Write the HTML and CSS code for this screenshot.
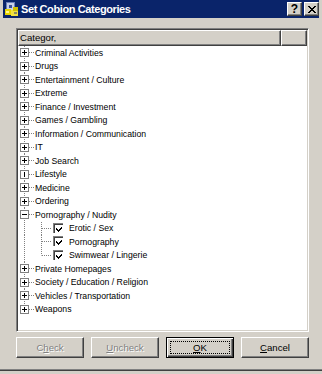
FILE: index.html
```html
<!DOCTYPE html>
<html>
<head>
<meta charset="utf-8">
<link rel="stylesheet" href="styles.css">
</head>
<body>
<div class="window">
  <div class="titlebar">
    <svg class="appicon" width="16" height="16" viewBox="0 0 16 16" shape-rendering="crispEdges">
      <rect x="2" y="1" width="9" height="9" fill="#6a7fb8"/>
      <rect x="3" y="2" width="7" height="7" fill="#c8d0e8"/>
      <rect x="5" y="4" width="3" height="3" fill="#3a4f98"/>
      <rect x="1" y="8" width="6" height="6" fill="#e8d400"/>
      <rect x="7" y="9" width="7" height="6" fill="#f0e040"/>
      <rect x="9" y="6" width="5" height="4" fill="#d0c000"/>
      <rect x="2" y="10" width="3" height="2" fill="#fff890"/>
      <rect x="10" y="11" width="3" height="2" fill="#8a8a60"/>
    </svg>
    <span class="title">Set Cobion Categories</span>
    <span class="capbtns">
      <span class="capbtn help">?</span>
      <span class="capbtn close"><svg width="8" height="7" viewBox="0 0 8 7" shape-rendering="crispEdges"><path d="M0 0h2v1h-2zM6 0h2v1h-2zM1 1h2v1h-2zM5 1h2v1h-2zM2 2h4v1h-4zM3 3h2v1h-2zM2 4h4v1h-4zM1 5h2v1h-2zM5 5h2v1h-2zM0 6h2v1h-2zM6 6h2v1h-2z" fill="#000"/></svg></span>
    </span>
  </div>
  <div class="content">
    <div class="listview">
      <div class="header">
        <div class="hcol first">Categor,</div>
        <div class="hcol rest"></div>
      </div>
      <div class="tree">
        <div class="node"><span class="gutter"><svg class="exp" width="9" height="9" viewBox="0 0 9 9" shape-rendering="crispEdges"><rect x="0.5" y="0.5" width="8" height="8" fill="#fff" stroke="#808080"/><path d="M2 4.5h5M4.5 2v5" stroke="#000"/></svg></span><span class="label">Criminal Activities</span></div>
        <div class="node"><span class="gutter"><svg class="exp" width="9" height="9" viewBox="0 0 9 9" shape-rendering="crispEdges"><rect x="0.5" y="0.5" width="8" height="8" fill="#fff" stroke="#808080"/><path d="M2 4.5h5M4.5 2v5" stroke="#000"/></svg></span><span class="label">Drugs</span></div>
        <div class="node"><span class="gutter"><svg class="exp" width="9" height="9" viewBox="0 0 9 9" shape-rendering="crispEdges"><rect x="0.5" y="0.5" width="8" height="8" fill="#fff" stroke="#808080"/><path d="M2 4.5h5M4.5 2v5" stroke="#000"/></svg></span><span class="label">Entertainment / Culture</span></div>
        <div class="node"><span class="gutter"><svg class="exp" width="9" height="9" viewBox="0 0 9 9" shape-rendering="crispEdges"><rect x="0.5" y="0.5" width="8" height="8" fill="#fff" stroke="#808080"/><path d="M2 4.5h5M4.5 2v5" stroke="#000"/></svg></span><span class="label">Extreme</span></div>
        <div class="node"><span class="gutter"><svg class="exp" width="9" height="9" viewBox="0 0 9 9" shape-rendering="crispEdges"><rect x="0.5" y="0.5" width="8" height="8" fill="#fff" stroke="#808080"/><path d="M2 4.5h5M4.5 2v5" stroke="#000"/></svg></span><span class="label">Finance / Investment</span></div>
        <div class="node"><span class="gutter"><svg class="exp" width="9" height="9" viewBox="0 0 9 9" shape-rendering="crispEdges"><rect x="0.5" y="0.5" width="8" height="8" fill="#fff" stroke="#808080"/><path d="M2 4.5h5M4.5 2v5" stroke="#000"/></svg></span><span class="label">Games / Gambling</span></div>
        <div class="node"><span class="gutter"><svg class="exp" width="9" height="9" viewBox="0 0 9 9" shape-rendering="crispEdges"><rect x="0.5" y="0.5" width="8" height="8" fill="#fff" stroke="#808080"/><path d="M2 4.5h5M4.5 2v5" stroke="#000"/></svg></span><span class="label">Information / Communication</span></div>
        <div class="node"><span class="gutter"><svg class="exp" width="9" height="9" viewBox="0 0 9 9" shape-rendering="crispEdges"><rect x="0.5" y="0.5" width="8" height="8" fill="#fff" stroke="#808080"/><path d="M2 4.5h5M4.5 2v5" stroke="#000"/></svg></span><span class="label">IT</span></div>
        <div class="node"><span class="gutter"><svg class="exp" width="9" height="9" viewBox="0 0 9 9" shape-rendering="crispEdges"><rect x="0.5" y="0.5" width="8" height="8" fill="#fff" stroke="#808080"/><path d="M2 4.5h5M4.5 2v5" stroke="#000"/></svg></span><span class="label">Job Search</span></div>
        <div class="node"><span class="gutter"><svg class="exp" width="9" height="9" viewBox="0 0 9 9" shape-rendering="crispEdges"><rect x="0.5" y="0.5" width="8" height="8" fill="#fff" stroke="#808080"/><path d="M4.5 2v5" stroke="#000"/></svg></span><span class="label">Lifestyle</span></div>
        <div class="node"><span class="gutter"><svg class="exp" width="9" height="9" viewBox="0 0 9 9" shape-rendering="crispEdges"><rect x="0.5" y="0.5" width="8" height="8" fill="#fff" stroke="#808080"/><path d="M2 4.5h5M4.5 2v5" stroke="#000"/></svg></span><span class="label">Medicine</span></div>
        <div class="node"><span class="gutter"><svg class="exp" width="9" height="9" viewBox="0 0 9 9" shape-rendering="crispEdges"><rect x="0.5" y="0.5" width="8" height="8" fill="#fff" stroke="#808080"/><path d="M2 4.5h5M4.5 2v5" stroke="#000"/></svg></span><span class="label">Ordering</span></div>
        <div class="node"><span class="gutter"><svg class="exp" width="9" height="9" viewBox="0 0 9 9" shape-rendering="crispEdges"><rect x="0.5" y="0.5" width="8" height="8" fill="#fff" stroke="#808080"/><path d="M2 4.5h5" stroke="#000"/></svg></span><span class="label">Pornography / Nudity</span></div>
        <div class="node child"><span class="gutter"><svg class="chk" width="11" height="11" viewBox="0 0 11 11" shape-rendering="crispEdges"><path d="M0 0h11v1h-10v10h-1z" fill="#808080"/><path d="M1 1h9v1h-8v8h-1z" fill="#404040"/><path d="M10 0h1v11h-11v-1h10z" fill="#fff"/><rect x="2" y="2" width="8" height="8" fill="#fff"/><path d="M3 5h1v1h1v1h1v-1h1v-1h1v-1h1v2h-1v1h-1v1h-1v1h-1v-1h-1v-1h-1z" fill="#000"/></svg></span><span class="label">Erotic / Sex</span></div>
        <div class="node child"><span class="gutter"><svg class="chk" width="11" height="11" viewBox="0 0 11 11" shape-rendering="crispEdges"><path d="M0 0h11v1h-10v10h-1z" fill="#808080"/><path d="M1 1h9v1h-8v8h-1z" fill="#404040"/><path d="M10 0h1v11h-11v-1h10z" fill="#fff"/><rect x="2" y="2" width="8" height="8" fill="#fff"/><path d="M3 5h1v1h1v1h1v-1h1v-1h1v-1h1v2h-1v1h-1v1h-1v1h-1v-1h-1v-1h-1z" fill="#000"/></svg></span><span class="label">Pornography</span></div>
        <div class="node child lastchild"><span class="gutter"><svg class="chk" width="11" height="11" viewBox="0 0 11 11" shape-rendering="crispEdges"><path d="M0 0h11v1h-10v10h-1z" fill="#808080"/><path d="M1 1h9v1h-8v8h-1z" fill="#404040"/><path d="M10 0h1v11h-11v-1h10z" fill="#fff"/><rect x="2" y="2" width="8" height="8" fill="#fff"/><path d="M3 5h1v1h1v1h1v-1h1v-1h1v-1h1v2h-1v1h-1v1h-1v1h-1v-1h-1v-1h-1z" fill="#000"/></svg></span><span class="label">Swimwear / Lingerie</span></div>
        <div class="node"><span class="gutter"><svg class="exp" width="9" height="9" viewBox="0 0 9 9" shape-rendering="crispEdges"><rect x="0.5" y="0.5" width="8" height="8" fill="#fff" stroke="#808080"/><path d="M2 4.5h5M4.5 2v5" stroke="#000"/></svg></span><span class="label">Private Homepages</span></div>
        <div class="node"><span class="gutter"><svg class="exp" width="9" height="9" viewBox="0 0 9 9" shape-rendering="crispEdges"><rect x="0.5" y="0.5" width="8" height="8" fill="#fff" stroke="#808080"/><path d="M2 4.5h5M4.5 2v5" stroke="#000"/></svg></span><span class="label">Society / Education / Religion</span></div>
        <div class="node"><span class="gutter"><svg class="exp" width="9" height="9" viewBox="0 0 9 9" shape-rendering="crispEdges"><rect x="0.5" y="0.5" width="8" height="8" fill="#fff" stroke="#808080"/><path d="M2 4.5h5M4.5 2v5" stroke="#000"/></svg></span><span class="label">Vehicles / Transportation</span></div>
        <div class="node lastroot"><span class="gutter"><svg class="exp" width="9" height="9" viewBox="0 0 9 9" shape-rendering="crispEdges"><rect x="0.5" y="0.5" width="8" height="8" fill="#fff" stroke="#808080"/><path d="M2 4.5h5M4.5 2v5" stroke="#000"/></svg></span><span class="label">Weapons</span></div>
      </div>
    </div>
    <div class="buttons">
      <div class="btn disabled"><span>C<u>h</u>eck</span></div>
      <div class="btn disabled"><span><u>U</u>ncheck</span></div>
      <div class="btn default"><div class="focus"><span><u>O</u>K</span></div></div>
      <div class="btn"><span><u>C</u>ancel</span></div>
    </div>
  </div>
</div>
</body>
</html>
```

FILE: styles.css
```css
html, body {
  margin: 0;
  padding: 0;
  background: #d4d0c8;
}

body {
  width: 322px;
  height: 374px;
  overflow: hidden;
  font-family: "Liberation Sans", Arial, sans-serif;
}

.window {
  box-sizing: border-box;
  width: 322px;
  height: 371px;
  padding: 0 3px;
  background: #d4d0c8;
  border-bottom: 1px solid #404040;
  box-shadow: inset 0 -1px 0 #808080;
}

.titlebar {
  height: 18px;
  background: #0a246a;
  display: flex;
  align-items: center;
  padding: 0 0 0 1px;
}

.appicon {
  width: 16px;
  height: 16px;
  flex: none;
}

.title {
  margin-left: 1px;
  color: #fff;
  font-weight: bold;
  font-size: 11px;
  letter-spacing: -0.4px;
  flex: 1;
}

.capbtns {
  display: flex;
  gap: 2px;
}

.capbtn {
  box-sizing: border-box;
  width: 15px;
  height: 14px;
  background: #d4d0c8;
  border-top: 1px solid #fff;
  border-left: 1px solid #fff;
  border-right: 1px solid #404040;
  border-bottom: 1px solid #404040;
  box-shadow: inset -1px -1px 0 #808080;
  display: flex;
  align-items: center;
  justify-content: center;
  font-weight: bold;
  font-size: 12px;
  color: #000;
  line-height: 1;
}

.content {
  padding: 10px 10px 0 13px;
}

.listview {
  box-sizing: border-box;
  width: 293px;
  height: 304px;
  background: #fff;
  border-top: 1px solid #808080;
  border-left: 1px solid #808080;
  border-right: 1px solid #fff;
  border-bottom: 1px solid #fff;
  box-shadow: inset 1px 1px 0 #404040, inset -1px -1px 0 #d4d0c8;
  padding: 1px;
  display: flex;
  flex-direction: column;
}

.header {
  display: flex;
  height: 16px;
  flex: none;
}

.hcol {
  box-sizing: border-box;
  background: #d4d0c8;
  border-top: 1px solid #fff;
  border-left: 1px solid #fff;
  border-right: 1px solid #404040;
  border-bottom: 1px solid #404040;
  box-shadow: inset -1px -1px 0 #808080;
  font-size: 9.6px;
  line-height: 14px;
  padding-left: 1px;
  color: #000;
}

.hcol.first {
  width: 263px;
}

.hcol.rest {
  flex: 1;
}

.tree {
  display: flex;
  flex-direction: column;
}

.node {
  height: 13.5px;
  display: flex;
  align-items: center;
}

.gutter {
  box-sizing: border-box;
  align-self: stretch;
  width: 17px;
  padding-left: 2px;
  display: flex;
  align-items: center;
  flex: none;
  background-image:
    repeating-linear-gradient(to bottom, #808080 0 1px, transparent 1px 2px),
    repeating-linear-gradient(to right, #808080 0 1px, transparent 1px 2px);
  background-size: 1px 100%, 6px 1px;
  background-position: 6px 0, 11px 50%;
  background-repeat: no-repeat;
}

.lastroot .gutter {
  background-size: 1px 50%, 6px 1px;
}

.child .gutter {
  width: 51px;
  padding-left: 35px;
  background-image:
    repeating-linear-gradient(to bottom, #808080 0 1px, transparent 1px 2px),
    repeating-linear-gradient(to bottom, #808080 0 1px, transparent 1px 2px),
    repeating-linear-gradient(to right, #808080 0 1px, transparent 1px 2px);
  background-size: 1px 100%, 1px 100%, 10px 1px;
  background-position: 6px 0, 23px 0, 24px 50%;
}

.child.lastchild .gutter {
  background-size: 1px 100%, 1px 50%, 10px 1px;
}

.exp, .chk {
  display: block;
  flex: none;
}

.label {
  font-size: 8.7px;
  color: #000;
  white-space: nowrap;
  line-height: 12px;
}

.buttons {
  width: 293px;
  margin-top: 5px;
  display: flex;
  gap: 7px;
}

.btn {
  box-sizing: border-box;
  width: 68px;
  height: 21px;
  background: #d4d0c8;
  border-top: 1px solid #fff;
  border-left: 1px solid #fff;
  border-right: 1px solid #404040;
  border-bottom: 1px solid #404040;
  box-shadow: inset -1px -1px 0 #808080;
  display: flex;
  align-items: center;
  justify-content: center;
  font-size: 9.6px;
  color: #000;
}

.btn.disabled {
  color: #808080;
  text-shadow: 1px 1px 0 #fff;
}

.btn.default {
  border: 1px solid #000;
  box-shadow: inset 1px 1px 0 #fff, inset -1px -1px 0 #404040, inset -2px -2px 0 #808080;
  padding: 3px;
}

.focus {
  box-sizing: border-box;
  width: 100%;
  height: 100%;
  border: 1px dotted #000;
  display: flex;
  align-items: center;
  justify-content: center;
}
```
